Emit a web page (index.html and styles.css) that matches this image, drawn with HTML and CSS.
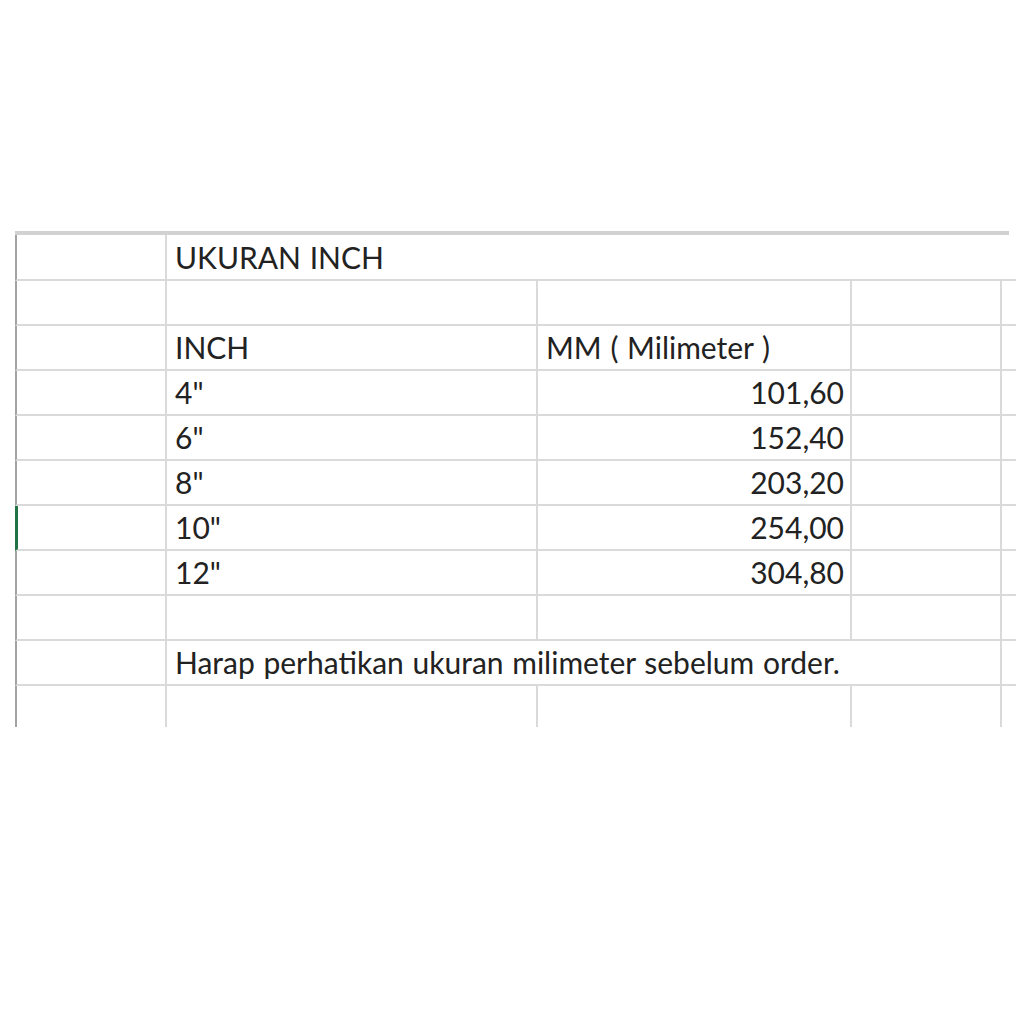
FILE: index.html
```html
<!DOCTYPE html>
<html lang="id">
<head>
<meta charset="utf-8">
<title>Ukuran Inch</title>
<link rel="stylesheet" href="styles.css">
</head>
<body>
<div class="page">
  <div class="sheet">
    <div class="cell first"></div>
    <div class="cell span3 open">UKURAN INCH</div>
    <div class="cell edge"></div>

    <div class="cell first"></div>
    <div class="cell"></div>
    <div class="cell"></div>
    <div class="cell"></div>
    <div class="cell edge"></div>

    <div class="cell first"></div>
    <div class="cell">INCH</div>
    <div class="cell">MM ( Milimeter )</div>
    <div class="cell"></div>
    <div class="cell edge"></div>

    <div class="cell first"></div>
    <div class="cell">4"</div>
    <div class="cell num">101,60</div>
    <div class="cell"></div>
    <div class="cell edge"></div>

    <div class="cell first"></div>
    <div class="cell">6"</div>
    <div class="cell num">152,40</div>
    <div class="cell"></div>
    <div class="cell edge"></div>

    <div class="cell first"></div>
    <div class="cell">8"</div>
    <div class="cell num">203,20</div>
    <div class="cell"></div>
    <div class="cell edge"></div>

    <div class="cell first active"></div>
    <div class="cell">10"</div>
    <div class="cell num">254,00</div>
    <div class="cell"></div>
    <div class="cell edge"></div>

    <div class="cell first"></div>
    <div class="cell">12"</div>
    <div class="cell num">304,80</div>
    <div class="cell"></div>
    <div class="cell edge"></div>

    <div class="cell first"></div>
    <div class="cell"></div>
    <div class="cell"></div>
    <div class="cell"></div>
    <div class="cell edge"></div>

    <div class="cell first"></div>
    <div class="cell span3">Harap perhatikan ukuran milimeter sebelum order.</div>
    <div class="cell edge"></div>

    <div class="cell first last"></div>
    <div class="cell last"></div>
    <div class="cell last"></div>
    <div class="cell last"></div>
    <div class="cell edge last"></div>
  </div>
</div>
</body>
</html>
```
FILE: styles.css
```css
html, body {
  margin: 0;
  padding: 0;
  background: #ffffff;
}

.page {
  padding: 231px 0 0 15px;
}

.sheet {
  display: grid;
  grid-template-columns: 152px 371px 314px 150px 7px;
  grid-auto-rows: 45px;
  grid-template-rows: 46px;
  width: 994px;
  border-top: 4px solid #d2d2d2;
  font-family: Lato, "Open Sans", sans-serif;
  font-size: 30px;
  word-spacing: 1px;
  color: #222222;
}

.cell {
  box-sizing: border-box;
  border-right: 2px solid #dadada;
  border-bottom: 2px solid #dadada;
  padding: 0 6px 7px 8px;
  display: flex;
  align-items: flex-end;
  line-height: 1;
  white-space: nowrap;
}

.first {
  border-left: 2px solid #a3a3a3;
}

.first.active {
  border-left: 3px solid #217346;
}

.span3 {
  grid-column: span 3;
}

.open {
  border-right: none;
}

.num {
  justify-content: flex-end;
}

.edge {
  border-right: none;
}

.last {
  border-bottom: none;
  height: 41px;
}
```
